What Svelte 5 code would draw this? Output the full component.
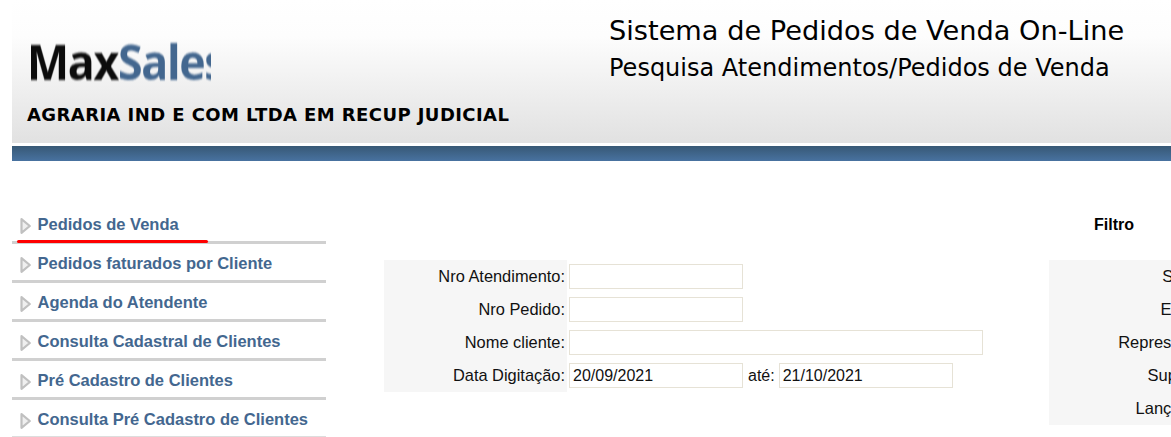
<script>
  const menu = [
    'Pedidos de Venda',
    'Pedidos faturados por Cliente',
    'Agenda do Atendente',
    'Consulta Cadastral de Clientes',
    'Pré Cadastro de Clientes',
    'Consulta Pré Cadastro de Clientes'
  ];
  const filters = ['Situação:', 'Empresa:', 'Representante:', 'Supervisor:', 'Lançamento:'];
</script>

<div class="page">
  <header class="top">
    <div class="brand">
      <div class="logo"><div class="logo-text"><span class="max">Max</span><span class="sales">Sales</span></div></div>
      <div class="company">AGRARIA IND E COM LTDA EM RECUP JUDICIAL</div>
    </div>
    <div class="titles">
      <div class="title">Sistema de Pedidos de Venda On-Line</div>
      <div class="subtitle">Pesquisa Atendimentos/Pedidos de Venda</div>
    </div>
  </header>
  <div class="band"></div>

  <div class="content">
    <nav class="menu">
      {#each menu as item, i}
        <div class="item" class:active={i === 0}>
          <svg class="arrow" width="11" height="16" viewBox="0 0 11 16">
            <path d="M1.5 1.2 L9.8 8 L1.5 14.8 Z" fill="#efefef" stroke="#c0c0c0" stroke-width="2.2" stroke-linejoin="round" />
          </svg>
          <span>{item}</span>
        </div>
      {/each}
    </nav>

    <main class="main">
      <div class="filtro">Filtro</div>
      <div class="panels">
        <div class="form">
          <div class="row">
            <div class="label">Nro Atendimento:</div>
            <div class="input short"></div>
          </div>
          <div class="row">
            <div class="label">Nro Pedido:</div>
            <div class="input short"></div>
          </div>
          <div class="row">
            <div class="label">Nome cliente:</div>
            <div class="input long"></div>
          </div>
          <div class="row">
            <div class="label">Data Digitação:</div>
            <div class="input short">20/09/2021</div>
            <span class="ate">até:</span>
            <div class="input date2">21/10/2021</div>
          </div>
        </div>
        <div class="side">
          {#each filters as f}
            <div class="side-row">{f}</div>
          {/each}
        </div>
      </div>
    </main>
  </div>
</div>

<style>
  :global(body) {
    margin: 0;
    background: #fff;
    overflow: hidden;
  }
  .page {
    width: 1171px;
    height: 437px;
    overflow: hidden;
    padding-left: 12px;
    box-sizing: border-box;
    font-family: "Liberation Sans", Arial, sans-serif;
    color: #000;
  }
  .top {
    height: 143px;
    background: linear-gradient(#ffffff 0%, #fdfdfd 25%, #e1e1e1 100%);
    display: flex;
  }
  .brand {
    width: 597px;
    flex: none;
    padding-left: 15px;
    box-sizing: border-box;
  }
  .logo {
    width: 184px;
    height: 46px;
    margin-top: 39px;
    overflow: hidden;
  }
  .logo-text {
    display: inline-block;
    font-family: "Open Sans", sans-serif;
    font-weight: 700;
    font-size: 48px;
    line-height: 46px;
    letter-spacing: -1.4px;
    white-space: nowrap;
    filter: blur(0.8px);
    transform: scaleX(0.93);
    transform-origin: left center;
  }
  .max { color: #0c0c0c; }
  .sales { color: #43678f; }
  .company {
    margin-top: 20px;
    font-family: "DejaVu Sans", Verdana, sans-serif;
    font-weight: 700;
    font-size: 18px;
    line-height: 20px;
    white-space: nowrap;
    letter-spacing: 0.42px;
  }
  .titles {
    padding-top: 15px;
    font-family: "DejaVu Sans", Verdana, sans-serif;
    white-space: nowrap;
  }
  .title {
    font-size: 27.2px;
    line-height: 32px;
  }
  .subtitle {
    font-size: 24px;
    line-height: 30px;
    margin-top: 6px;
  }
  .band {
    margin-top: 3px;
    height: 15px;
    background: linear-gradient(#375875, #4872a0);
  }
  .content {
    display: flex;
    margin-top: 44px;
    align-items: flex-start;
  }
  .menu {
    width: 314px;
    flex: none;
  }
  .item {
    height: 36px;
    border-bottom: 3px solid #d0d0d0;
    display: flex;
    align-items: center;
    padding-left: 8px;
    color: #43678f;
    font-weight: 700;
    font-size: 16.5px;
    white-space: nowrap;
    position: relative;
  }
  .item span {
    margin-left: 6.5px;
    position: relative;
    top: 1px;
  }
  .item:last-child {
    border-bottom: 1px solid #ddd;
  }
  .arrow {
    flex: none;
    margin-top: 6px;
  }
  .active::after {
    content: "";
    position: absolute;
    left: 5px;
    bottom: -2px;
    width: 191px;
    height: 3px;
    background: #f00;
    border-radius: 2px;
  }
  .main {
    flex: none;
    margin-left: 58px;
    width: 900px;
  }
  .filtro {
    margin-left: 710px;
    font-weight: 700;
    font-size: 16px;
    line-height: 20px;
    margin-top: 10px;
  }
  .panels {
    display: flex;
    align-items: flex-start;
    margin-top: 25px;
  }
  .form {
    background: linear-gradient(90deg, #f6f6f6 183px, #fff 183px);
    width: 665px;
    height: 132px;
    flex: none;
    display: flex;
    flex-direction: column;
    font-size: 16px;
  }
  .row {
    display: flex;
    align-items: center;
    height: 33px;
  }
  .label {
    width: 181px;
    flex: none;
    text-align: right;
    color: #111;
    font-size: 16.4px;
  }
  .input {
    height: 25px;
    box-sizing: border-box;
    border: 1px solid #e6e2d6;
    background: #fff;
    margin-left: 4px;
    padding-left: 3px;
    color: #111;
    line-height: 23px;
  }
  .short { width: 174px; }
  .long { width: 414px; }
  .date2 { width: 174px; margin-left: 4px; }
  .ate { margin-left: 5px; color: #111; }
  .side {
    width: 182px;
    height: 165px;
    background: #f6f6f6;
    flex: none;
    font-size: 16.5px;
    color: #111;
  }
  .side-row {
    height: 33px;
    line-height: 33px;
    text-align: right;
    white-space: nowrap;
  }
</style>
